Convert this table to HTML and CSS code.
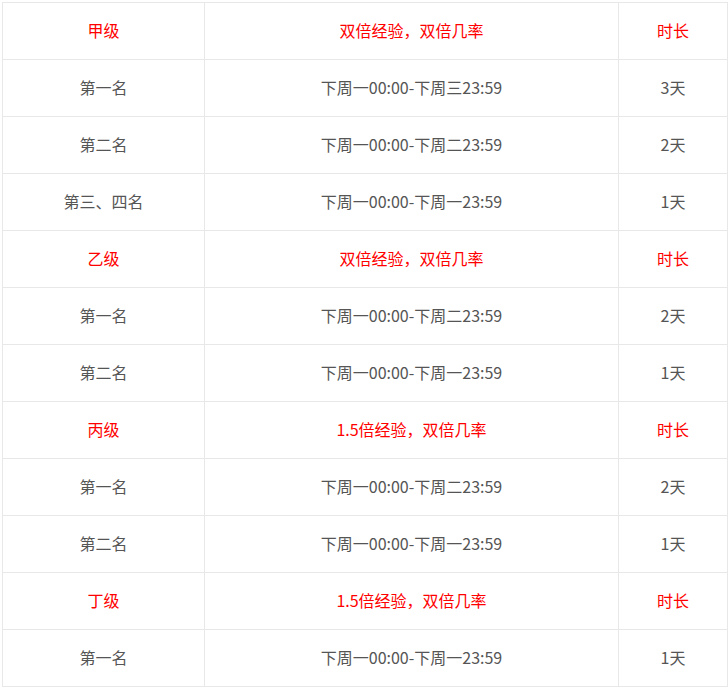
FILE: index.html
```html
<!DOCTYPE html>
<html lang="zh-CN">
<head>
<meta charset="utf-8">
<link rel="stylesheet" href="styles.css">
</head>
<body>
<table class="tbl">
  <colgroup><col class="c1"><col class="c2"><col class="c3"></colgroup>
  <tr class="head"><td>甲级</td><td>双倍经验，双倍几率</td><td>时长</td></tr>
  <tr><td>第一名</td><td>下周一00:00-下周三23:59</td><td>3天</td></tr>
  <tr><td>第二名</td><td>下周一00:00-下周二23:59</td><td>2天</td></tr>
  <tr><td>第三、四名</td><td>下周一00:00-下周一23:59</td><td>1天</td></tr>
  <tr class="head"><td>乙级</td><td>双倍经验，双倍几率</td><td>时长</td></tr>
  <tr><td>第一名</td><td>下周一00:00-下周二23:59</td><td>2天</td></tr>
  <tr><td>第二名</td><td>下周一00:00-下周一23:59</td><td>1天</td></tr>
  <tr class="head"><td>丙级</td><td>1.5倍经验，双倍几率</td><td>时长</td></tr>
  <tr><td>第一名</td><td>下周一00:00-下周二23:59</td><td>2天</td></tr>
  <tr><td>第二名</td><td>下周一00:00-下周一23:59</td><td>1天</td></tr>
  <tr class="head"><td>丁级</td><td>1.5倍经验，双倍几率</td><td>时长</td></tr>
  <tr><td>第一名</td><td>下周一00:00-下周一23:59</td><td>1天</td></tr>
</table>
</body>
</html>
```
FILE: styles.css
```css
html, body { margin: 0; padding: 0; background: #fff; }
body { padding: 2px; }
.tbl {
  border-collapse: collapse;
  width: 725px;
  table-layout: fixed;
  font-family: "Noto Sans CJK SC", "Noto Sans", sans-serif;
  font-size: 16px;
  color: #555;
}
.c1 { width: 202px; }
.c2 { width: 414px; }
.c3 { width: 109px; }
.tbl td {
  border: 1px solid #e8e8e8;
  height: 56px;
  padding: 0 0 2px 0;
  text-align: center;
  vertical-align: middle;
  line-height: 20px;
  box-sizing: border-box;
}
.tbl tr { height: 57px; }
.head td { color: #ff0000; }
```
